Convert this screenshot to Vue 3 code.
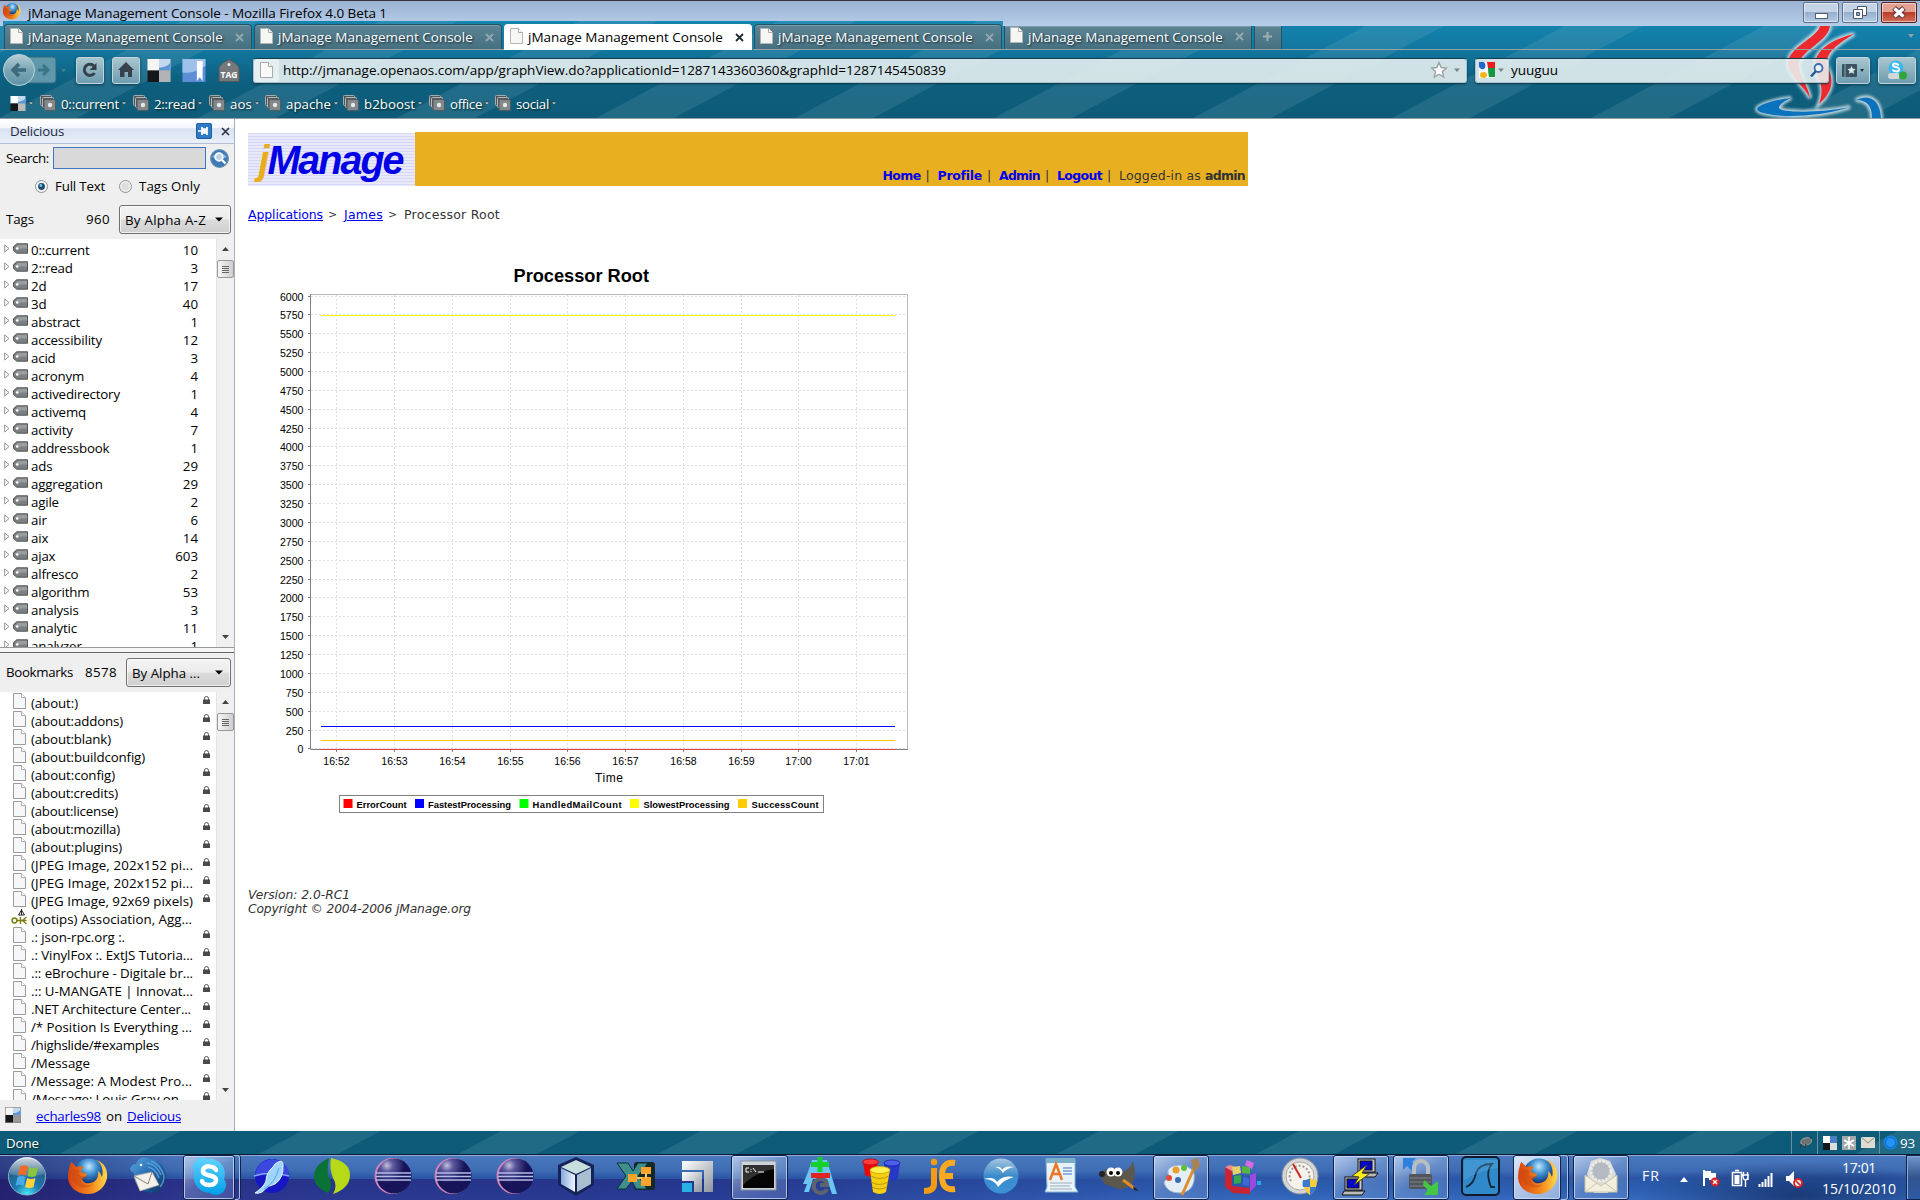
<script setup>
// Sets letter-spacing so that a label occupies an exact width.
const vFit = {
  mounted(el, { value }) {
    const natural = el.getBoundingClientRect().width
    const n = el.textContent.length
    if (value && n) el.style.letterSpacing = ((value - natural) / n).toFixed(3) + 'px'
  }
}

const tabs = [0, 1, 2, 3, 4]
const marks = [
  ['0::current', 58, 93], ['2::read', 41, 76], ['aos', 22, 56], ['apache', 45, 78],
  ['b2boost', 51, 86], ['office', 32, 66], ['social', 33, 70]
]
const tags = [
  ['0::current', 10], ['2::read', 3], ['2d', 17], ['3d', 40], ['abstract', 1], ['accessibility', 12],
  ['acid', 3], ['acronym', 4], ['activedirectory', 1], ['activemq', 4], ['activity', 7], ['addressbook', 1],
  ['ads', 29], ['aggregation', 29], ['agile', 2], ['air', 6], ['aix', 14], ['ajax', 603], ['alfresco', 2],
  ['algorithm', 53], ['analysis', 3], ['analytic', 11], ['analyzer', 1]
]
const books = [
  ['(about:)', 47], ['(about:addons)', 92], ['(about:blank)', 80], ['(about:buildconfig)', 114], ['(about:config)', 84],
  ['(about:credits)', 87], ['(about:license)', 87], ['(about:mozilla)', 89], ['(about:plugins)', 91],
  ['(JPEG Image, 202x152 pi...', 162], ['(JPEG Image, 202x152 pi...', 162], ['(JPEG Image, 92x69 pixels)', 162],
  ['(ootips) Association, Agg...', 161], ['.: json-rpc.org :.', 94], ['.: VinylFox :. ExtJS Tutoria...', 162],
  ['.:: eBrochure - Digitale br...', 162], ['.:: U-MANGATE | Innovat...', 162], ['.NET Architecture Center...', 160],
  ['/* Position Is Everything ...', 161], ['/highslide/#examples', 128], ['/Message', 59],
  ['/Message: A Modest Pro...', 161], ['/Message: Louis Gray on ...', 161]
]
const yTicks = Array.from({ length: 25 }, (_, i) => ({ v: 6000 - i * 250, y: Math.round(176.5 + i * 18.87) - 0.5 - 120 }))
const xTicks = ['16:52', '16:53', '16:54', '16:55', '16:56', '16:57', '16:58', '16:59', '17:00', '17:01']
  .map((t, i) => ({ t, x: Math.round(88.3 + i * 57.77) + 0.5 }))
const legend = [
  ['ErrorCount', '#f00', 95.5, 108.5, 50], ['FastestProcessing', '#00f', 167, 180, 83],
  ['HandledMailCount', '#0f0', 271.5, 284.5, 89], ['SlowestProcessing', '#ff0', 382, 395.5, 86],
  ['SuccessCount', '#fc0', 490, 503.5, 67]
]
const series = [['#ffff00', 75.5], ['#0000ff', 486.5], ['#ffc800', 500.5], ['#dc4040', 509.5]]
const topStripes = Array.from({ length: 12 }, (_, i) => 795 + (i - 5) * 199)
const lowStripes = Array.from({ length: 11 }, (_, i) => 59 + (i - 1) * 199.5)

const fox = (id) => `<defs><radialGradient id="${id}a" cx=".5" cy=".25"><stop offset="0" stop-color="#bfe9ff"/><stop offset=".5" stop-color="#3d8fd0"/><stop offset="1" stop-color="#123a7c"/></radialGradient><linearGradient id="${id}b" x1="0" x2="1"><stop offset="0" stop-color="#d9420f"/><stop offset=".6" stop-color="#f58a1e"/><stop offset="1" stop-color="#ffd84a"/></linearGradient></defs>
<circle cx="25" cy="20.500" r="16" fill="url(#${id}a)"/>
<path d="M7 8c2 1 4 3 5 5 3-1 6-1 8 0-2 1-3 3-3 5l6 2c0 2-3 3-5 4 0 4 4 6 8 5 7-1 9-7 8-12 3 2 3 4 4 6 2-8-1-14-6-17 8 2 12 9 11 18-2 10-10 16-19 16C12 40 5 33 4 24c0-6 1-10 3-16z" fill="url(#${id}b)"/>
<path d="M6 17c3-2 7-2 10 0-3 3 0 7 7 5-1 3-4 3-6 4 1 5 7 7 12 4-6 7-19 3-21-6-1-3-2-5-2-7z" fill="#c8460f" opacity=".5"/>`
const eclipse = `<defs><radialGradient id="ec" cx=".3" cy=".2"><stop offset="0" stop-color="#c4c1de"/><stop offset=".35" stop-color="#5f5aa0"/><stop offset="1" stop-color="#17145a"/></radialGradient></defs><circle cx="22.500" cy="22" r="18" fill="#cf86b8"/><circle cx="24" cy="22" r="17.500" fill="url(#ec)"/><path d="M6 19h35M6 22.500h35M6 26h35" stroke="#b5bbe8" stroke-width="1.300"/>`

const icons = {
  start: `<defs><radialGradient id="st" cx=".5" cy="1" r=".9"><stop offset="0" stop-color="#4df0ff"/><stop offset=".4" stop-color="#1a78b0"/><stop offset="1" stop-color="#2c567c"/></radialGradient><linearGradient id="st2" x2="0" y2="1"><stop offset="0" stop-color="#fff" stop-opacity=".8"/><stop offset="1" stop-color="#fff" stop-opacity=".1"/></linearGradient></defs><circle cx="23" cy="22.500" r="18.500" fill="url(#st)" stroke="#8db6cf"/><path d="M6 20a17 17 0 0 1 34 0q-17 5-34 0z" fill="url(#st2)"/><path d="M16 12.500q4-2.500 8 0l-2 9q-4-2-8 0z" fill="#f06a28"/><path d="M25.500 13q4 2.500 8.500 0l-2 9q-4 2-8.500 0z" fill="#8cc63c"/><path d="M13.500 23q4-2 8 0l-2 9q-4-2.500-8 0z" fill="#4aa9e9"/><path d="M23 24q4 2 8.500 0l-2 9q-4 2-8.500 0z" fill="#ffd23c"/>`,
  firefox: fox('f1'),
  firefox2: fox('f2'),
  thunderbird: `<defs><linearGradient id="tb" x2="1" y2="1"><stop offset="0" stop-color="#5aa9e4"/><stop offset=".5" stop-color="#2368ae"/><stop offset="1" stop-color="#0e2c5e"/></linearGradient></defs><path d="M4 15c1-3 3-5 6-5C12 4 18 2 24 5c9 0 16 8 16 18 0 6-3 10-7 13 1 1-2 3-6 3C15 39 7 30 8 19c-2-1-3-2-4-4z" fill="url(#tb)"/><path d="M21 9q9 1 14 12M25 7q10 4 13 15M22 13q8 2 11 11M34 33q4-5 4-11" fill="none" stroke="#6cb2e8" stroke-width="1.500" opacity=".7"/><path d="M8 22l18-4 7 13-19 6z" fill="#f4f0ea" stroke="#b7ada0" stroke-width=".7"/><path d="M8 22l14 8 4-12" fill="none" stroke="#8b8175"/><circle cx="15" cy="11" r="1.300" fill="#fff"/>`,
  skype: `<defs><linearGradient id="sk" x2="0" y2="1"><stop offset="0" stop-color="#62d2ff"/><stop offset="1" stop-color="#009fe8"/></linearGradient></defs><path d="M7 12a10 10 0 0 1 15-7 15 15 0 0 1 16 20 10 10 0 0 1-14 14A16 16 0 0 1 8 20q-1-4-1-8z" fill="url(#sk)"/><path d="M30 16c-1-4-13-6-13 1 0 6 13 3 13 9 0 7-13 6-14 1" fill="none" stroke="#fff" stroke-width="4.500" stroke-linecap="round"/>`,
  seamonkey: `<circle cx="24" cy="22" r="17" fill="#1717c4"/><path d="M7 22q17-6 34 0-1-15-17-17Q9 7 7 22z" fill="#3a48dd"/><path d="M6 22q16-5 35 0" stroke="#89a8ff" fill="none" stroke-width="1.500"/><path d="M30 8q5-2 5 2 1 14-8 20-7 1-13 8-4 2-7 1 9-6 11-12 0-8 7-14 2-4 5-5z" fill="#9fd4fb" stroke="#e3f5ff"/><path d="M16 35q11-6 15-21" fill="none" stroke="#5aa2e4"/>`,
  leaf: `<path d="M20 4Q5 11 5 22t14 17q5-5 2-13-4-6-1-22z" fill="#0b7236"/><path d="M22 4q19 4 19 17T24 40q5-8 0-16-4-10-2-20z" fill="#b6d918"/>`,
  eclipse,
  cube: `<defs><linearGradient id="cu" x2="1"><stop offset="0" stop-color="#87a9dd"/><stop offset="1" stop-color="#f0f7ff"/></linearGradient></defs><path d="M23 3l18 8v20L23 42 5 31V11z" fill="#14235a"/><path d="M23 6l15 7-15 7-15-7z" fill="#c7e0dd"/><path d="M8 14l14 7v17L8 30z" fill="url(#cu)"/><path d="M38 14l-14 7v17l14-8z" fill="#a9bfd0"/>`,
  xicon: `<rect x="20" y="8" width="21" height="28" rx="3" fill="#14282a"/><path d="M3 9h11l5 8 5-8h10L24 22l9 13H22l-4-8-6 8H3l9-13z" fill="#3f8f8a" stroke="#0b3334"/><g fill="#f9a32c"><rect x="27" y="13" width="10" height="7"/><rect x="14" y="20" width="9" height="8"/><rect x="27" y="23" width="10" height="9"/></g><path d="M32 19v5M23 24h5" stroke="#fbc56a" stroke-width="2"/>`,
  steps: `<defs><linearGradient id="sp" x2="1" y2="1"><stop offset="0" stop-color="#fff"/><stop offset="1" stop-color="#8c949d"/></linearGradient></defs><path d="M8 7h31v31h-9V16H8z" fill="url(#sp)"/><path d="M8 18h20v20h-8V27H8z" fill="url(#sp)"/><rect x="8" y="29" width="10" height="9" fill="#28afe4"/>`,
  cmd: `<rect x="5" y="7" width="35" height="29" fill="#cdd3da" stroke="#8c939c"/><rect x="7" y="11" width="31" height="23" fill="#050505"/><path d="M7 11h31v4Q20 18 7 31z" fill="#444" opacity=".7"/><path d="M13 14h-3v4h3M15 15v1M15 17v1M17 14l3 4M22 18h6" stroke="#fff" fill="none"/>`,
  android: `<path d="M15 6h15l4 14 6 20h-5l-5-15H16l-4 13H7l3-8H6l5-12z" fill="#6bc5f2"/><path d="M30 29a7 7 0 1 0 0 6" fill="none" stroke="#5e646d" stroke-width="4"/><path d="M23 31h9" stroke="#5e646d" stroke-width="4"/><rect x="14" y="19" width="19" height="5" fill="#e12323"/><path d="M23 3v15M14 10.500h18" stroke="#17cf2a" stroke-width="5"/>`,
  coins: `<g stroke-width=".8"><path d="M5 8l2 13q6 4 11-1l2-12z" fill="#e60b0b"/><ellipse cx="12.500" cy="8" rx="8" ry="3" fill="#ff3b3b" stroke="#b00"/><path d="M26 9l1 15q7 5 13 0l2-15z" fill="#2737c7"/><ellipse cx="34" cy="9" rx="8" ry="3" fill="#505fe9" stroke="#1222a0"/><path d="M12 16l3 22q7 4 13 0l4-22z" fill="#f4cf10"/><ellipse cx="22" cy="16" rx="10" ry="3.500" fill="#ffef4c" stroke="#c9a400"/></g><path d="M13 22q9 5 18 0M13 28q8 5 17 0M14 33q8 4 15 0" stroke="#bf9500" fill="none"/>`,
  je: `<path d="M16 14v16q0 7-10 7" fill="none" stroke="#f59a14" stroke-width="6"/><circle cx="16" cy="8" r="3.200" fill="#f59a14"/><path d="M37 9q-13-2-13 13t13 13M22 22h13" fill="none" stroke="#fba91f" stroke-width="6"/>`,
  office: `<defs><linearGradient id="oo" x2="0" y2="1"><stop offset="0" stop-color="#a8c6df"/><stop offset=".5" stop-color="#3a8bcc"/><stop offset="1" stop-color="#3b93d6"/></linearGradient></defs><circle cx="23" cy="22" r="17.500" fill="url(#oo)"/><path d="M17 13q6-1 7 3 3-5 12-3-7 1-11 6-3-5-8-6zM6 25q10-3 13 3 6-7 17-5-9 2-16 10-4-8-14-8z" fill="#fff"/>`,
  wordpad: `<path d="M8 5h29v28l3 5H7l2-5z" fill="#e8f2f9" stroke="#84b7d5"/><rect x="8" y="4" width="29" height="5" fill="#79adc8"/><path d="M12 26l6-16 6 16M14 20h8" stroke="#ec7622" stroke-width="2.500" fill="none"/><path d="M25 14h9M25 17h9M25 20h9" stroke="#4070c0"/><path d="M12 29h22M12 32h20M12 35h22" stroke="#9daab8"/>`,
  gimp: `<path d="M5 18q6-4 10-3l12 2q6-2 9-10 4 14-1 23-8 8-19 3-9-2-11-7z" fill="#5d584d"/><circle cx="5" cy="20" r="3" fill="#222"/><circle cx="14" cy="18" r="4.500" fill="#fff"/><circle cx="21" cy="18" r="4.500" fill="#fff"/><circle cx="14" cy="19" r="2"/><circle cx="21" cy="19" r="2"/><path d="M26 26l11 8" stroke="#e08a28" stroke-width="3"/><path d="M36 32l6 5-5-1z" fill="#222"/>`,
  paint: `<path d="M21 11q18 1 15 16-2 11-14 12-13 0-16-10 0-3 4-4 4-2 0-5Q8 12 21 11z" fill="#e3eef7" stroke="#93b5d0"/><circle cx="18" cy="16" r="3.500" fill="#eb9f2b"/><circle cx="26" cy="14" r="3" fill="#5fbf3a"/><circle cx="11" cy="24" r="3" fill="#e54a30"/><circle cx="20" cy="26" r="3" fill="#3a6ab6"/><path d="M37 12L24 41" stroke="#dd8d2d" stroke-width="3"/><path d="M33 6l7-2 2 8-6 6z" fill="#a98155"/>`,
  rubik: `<path d="M6 13l7 4v15l18 2v6l-17-1-8-6z" fill="#c92433"/><path d="M6 13l5-2 6 2-4 4z" fill="#f28a90"/><path d="M13 13l8-1 1 7-8 2z" fill="#e4d268"/><path d="M23 12l8 1v7l-8-1z" fill="#55b53e"/><path d="M15 22l7-1v8l-7 1z" fill="#35aa4b"/><path d="M24 23l6 1v8l-6-1z" fill="#3c68d8"/><path d="M31 21l6-2v13l-6 6z" fill="#9a4ade"/><path d="M28 6l7 3-2 6-7-4z" fill="#d76be6"/><rect x="38" y="27" width="4" height="4" fill="#28a6e8"/>`,
  gauge: `<circle cx="22" cy="22" r="18" fill="#d3d5d7" stroke="#8d9296"/><circle cx="22" cy="22" r="14" fill="#f5f2ea" stroke="#aaa"/><path d="M13 27a10 10 0 1 1 18-2" fill="none" stroke="#9b9b9b" stroke-width="2" stroke-dasharray="2 2"/><path d="M15 10l8 14" stroke="#c62b27" stroke-width="2"/><path d="M25 26q5 0 7-2 3 2 7 2 0 11-7 15-7-4-7-15z" fill="#f7cf3d"/><path d="M32 24v9h-7q-1-3 0-7 5 0 7-2zM32 33h6q-1 5-6 8z" fill="#3c78cc"/>`,
  putty: `<g stroke="#111"><rect x="20" y="5" width="17" height="13" fill="#ccc"/><rect x="22" y="7" width="12" height="9" fill="#0808c8"/><path d="M19 19h21l-3 4H17z" fill="#bbb"/><rect x="7" y="23" width="17" height="13" fill="#ccc"/><rect x="9" y="25" width="12" height="9" fill="#0808c8"/><path d="M6 37h21l-3 4H4z" fill="#bbb"/></g><path d="M29 11L14 22l7 1-5 8 15-11-7-1z" fill="#ffee1a" stroke="#443"/>`,
  lock: `<path d="M5 4h13l-4 4 4 6-4 3-5-5-4 4z" fill="#2f80dd"/><path d="M16 21v-7a7 7 0 0 1 14 0v8" fill="none" stroke="#babec3" stroke-width="4"/><rect x="11" y="20" width="23" height="15" rx="2" fill="#50555a"/><path d="M12 24h21M12 28h21M12 32h21" stroke="#80868d"/><path d="M26 26l7 6 7-5v14H26l4-5-5-5z" fill="#43c744"/>`,
  shark: `<rect x="4" y="3" width="37" height="38" rx="4" fill="#3089c9" stroke="#101a2b" stroke-width="2"/><path d="M8 33q8-3 10-14 3-9 16-9-7 8-1 23h4" fill="none" stroke="#122740" stroke-width="1.800"/><path d="M6 6h34v8q-17 2-34 12z" fill="#67b5e6" opacity=".3"/>`,
  mail: `<path d="M9 20L13 7l9-3 10 3 6 13-8 19H16z" fill="#dbdcd9"/><circle cx="23" cy="17" r="10" fill="#b5bac2" stroke="#eceae2" stroke-width="3" stroke-dasharray="3 1"/><path d="M7 21l16 11 16-11v17H7z" fill="#f2f0dc" stroke="#c8c5ad"/><path d="M7 38l12-9M39 38l-12-9" stroke="#c5c2ab"/>`
}
const tasks = [
  ['start', 27], ['firefox', 87], ['thunderbird', 149], ['skype', 208, 52, 5], ['seamonkey', 271], ['leaf', 332],
  ['eclipse', 393], ['eclipse', 453], ['eclipse', 515], ['cube', 576], ['xicon', 637], ['steps', 697],
  ['cmd', 759, 57], ['android', 820], ['coins', 881], ['je', 941], ['office', 1001], ['wordpad', 1061], ['gimp', 1120],
  ['paint', 1181, 56], ['rubik', 1242], ['gauge', 1301], ['putty', 1361, 56], ['lock', 1421, 56], ['shark', 1481],
  ['firefox2', 1537, 48, 7], ['mail', 1601, 56]
].map((t, i, a) => ({ icon: t[0], w: t[2], extra: t[3], gap: t[1] - 28 - (i ? a[i - 1][1] + 28 : 0) }))
</script>

<template>
  <div class="screen">
    <header class="chrome">
      <svg class="backdrop" width="1920" height="119" viewBox="0 0 1920 119">
        <defs>
          <linearGradient id="sky" x2="0" y2="1"><stop offset="0" stop-color="#98b1d1" /><stop offset="1" stop-color="#b8cfea" /></linearGradient>
          <linearGradient id="teal" gradientUnits="userSpaceOnUse" y1="21" y2="119" x2="0">
            <stop offset="0" stop-color="#1485b0" /><stop offset=".3" stop-color="#12769e" /><stop offset=".63" stop-color="#0d5f7e" /><stop offset="1" stop-color="#0d5b78" />
          </linearGradient>
          <clipPath id="body"><path d="M0 26h3v-5h1000v5h917v93H0z" /></clipPath>
          <filter id="glow" x="-20%" y="-20%" width="140%" height="140%"><feGaussianBlur stdDeviation="1.600" /></filter>
        </defs>
        <rect width="1920" height="27" fill="url(#sky)" />
        <rect width="1920" height="1" fill="#33343a" />
        <g clip-path="url(#body)">
          <rect width="1920" height="119" fill="url(#teal)" />
          <polygon v-for="x in topStripes" :key="x" :points="`${x},118 ${x + 78},118 ${x + 260},21 ${x + 182},21`" fill="#9fc8d4" opacity=".14" />
          <g id="java">
            <g filter="url(#glow)" fill="#fff" stroke="#fff" stroke-width="4" opacity=".75">
              <path d="M1820 26c-3 12-33 22-32 38 1 12 16 22 22 34-2-14-12-22-11-34 2-14 29-22 31-38z" />
              <path d="M1854 34c-18 4-38 14-39 30-1 14 12 18 4 40 14-12 15-24 9-36-5-12 6-22 26-34z" />
              <path d="M1791 98c-20 2-34 8-34 11 0 7 50 12 93-2-28 6-70 6-71 1 0-3 5-7 12-10zM1856 100c12-6 24-2 25 18h-9c0-12-5-18-16-18z" />
            </g>
            <path d="M1820 26c-3 12-33 22-32 38 1 12 16 22 22 34-2-14-12-22-11-34 2-14 29-22 31-38z" fill="#ec2a2d" />
            <path d="M1854 34c-18 4-38 14-39 30-1 14 12 18 4 40 14-12 15-24 9-36-5-12 6-22 26-34z" fill="#ec2a2d" />
            <path d="M1791 98c-20 2-34 8-34 11 0 7 50 12 93-2-28 6-70 6-71 1 0-3 5-7 12-10zM1856 100c12-6 24-2 25 18h-9c0-12-5-18-16-18z" fill="#0b73bd" />
          </g>
          <path d="M0 49.500h505M753 49.500h1167" stroke="#93a3a6" />
          <path d="M0 118.500h1920" stroke="#959ea1" />
        </g>
      </svg>

      <div class="titlebar">
        <svg class="appicon" viewBox="0 0 46 46" v-html="icons.firefox"></svg>
        <span v-fit="359" class="title">jManage Management Console - Mozilla Firefox 4.0 Beta 1</span>
        <div class="winbtns">
          <span class="wb"><svg width="36" height="21"><rect x="12.500" y="11.500" width="12" height="5" fill="#fff" stroke="#566070" /></svg></span>
          <span class="wb"><svg width="36" height="21"><path d="M15.500 4.500h9v9h-9z" fill="#fff" stroke="#4c5668" /><path d="M11.500 7.500h9v9h-9z" fill="#fff" stroke="#4c5668" /><path d="M14.500 10.500h3v3h-3z" fill="#8fa6c4" stroke="#4c5668" /></svg></span>
          <span class="wb close"><svg width="36" height="21"><path d="M13 6l10 9M23 6l-10 9" stroke="#5a3a40" stroke-width="5.500" /><path d="M13.500 6.500l9 8M22.500 6.500l-9 8" stroke="#fff" stroke-width="3.200" /></svg></span>
        </div>
      </div>

      <div class="tabs">
        <div v-for="i in tabs" :key="i" class="tab" :class="{ active: i === 2, flat: i === 4 }">
          <svg class="page" viewBox="0 0 13 16"><path d="M.5.500h8l4 4v11H.5z" fill="#f6f6f4" stroke="#b5b5b2" /><path d="M8.500.500v4h4" fill="#fff" stroke="#a8a8a5" /></svg>
          <span v-fit="193" class="tabtext">jManage Management Console</span>
          <svg class="x" viewBox="0 0 9 9"><path d="M1 1l7 7M8 1l-7 7" stroke="currentColor" stroke-width="1.800" /></svg>
        </div>
        <div class="tab plus flat"><svg width="11" height="11"><path d="M5.500 1v9M1 5.500h9" stroke="#9fb0b5" stroke-width="2" /></svg></div>
        <svg class="alltabs" width="8" height="6"><path d="M1 1h6L4 5z" fill="#8ca2aa" /></svg>
      </div>

      <div class="nav">
        <svg class="backfwd" width="72" height="36" viewBox="0 0 72 36">
          <defs><linearGradient id="btn" x2="0" y2="1"><stop offset="0" stop-color="#b5ced6" /><stop offset=".5" stop-color="#7ca6b5" /><stop offset="1" stop-color="#5f93a6" /></linearGradient></defs>
          <rect x="22" y="5" width="34" height="26" rx="3" fill="#5f98ab" stroke="#2f687c" />
          <circle cx="19" cy="18" r="15.500" fill="url(#btn)" stroke="#b9d2d9" />
          <path d="M26 18H13m6-6l-6 6 6 6" fill="none" stroke="#3d6a7d" stroke-width="3.500" />
          <path d="M38 18h10m-5-5l5 5-5 5" fill="none" stroke="#3d7388" stroke-width="3" />
          <path d="M61 17h5l-2.500 3z" fill="#4e8194" />
        </svg>
        <span class="tb"><svg width="20" height="20" viewBox="0 0 20 20"><path d="M14.500 13a5.600 5.600 0 1 1-.5-7" fill="none" stroke="#33414b" stroke-width="3" /><path d="M16.500 3v7h-7z" fill="#33414b" /></svg></span>
        <span class="tb home"><svg width="20" height="20" viewBox="0 0 20 20"><path d="M10 2l8 8h-2v7h-4v-5H8.500v5H4v-7H2z" fill="#36434d" /></svg></span>
        <svg class="sq" viewBox="0 0 24 24"><rect width="24" height="24" fill="#777" /><rect width="12" height="12" fill="#f5f5f5" /><rect x="12" width="12" height="12" fill="#c3d8ee" /><path d="M12 12V9q8 0 12-5v8z" fill="#5c95d6" /><rect y="12" width="12" height="12" fill="#15181a" /><rect x="12" y="12" width="12" height="12" fill="#b2b3b4" /></svg>
        <svg class="sq b" viewBox="0 0 24 24"><rect width="24" height="24" fill="#5c8fd6" /><path d="M0 0h24v7Q12 16 0 14z" fill="#9fc0ea" /><path d="M15 2h6v21l-3-4-3 4z" fill="#fff" /></svg>
        <svg class="tagbtn" viewBox="0 0 22 22"><path d="M4 4l7-4 7 4 3 4v14H1V8z" fill="#75797b" stroke="#55595b" /><circle cx="11" cy="5" r="1.500" fill="#eee" /><text x="11" y="18.500" text-anchor="middle" textLength="17" lengthAdjust="spacingAndGlyphs" font-family="Open Sans, sans-serif" font-weight="700" font-size="8.500" fill="#fff">TAG</text></svg>
        <div class="url">
          <span class="ident"><svg class="page" viewBox="0 0 13 16"><path d="M.5.500h8l4 4v11H.5z" fill="#fafafa" stroke="#a8a8a5" /><path d="M8.500.500v4h4" fill="#fff" stroke="#a8a8a5" /></svg></span>
          <span v-fit="663" class="urltext">http://jmanage.openaos.com/app/graphView.do?applicationId=1287143360360&amp;graphId=1287145450839</span>
          <svg class="star" viewBox="0 0 18 18"><path d="M9 1.500l2.200 5 5.300.500-4 3.600 1.200 5.400L9 13.200 4.300 16l1.200-5.400-4-3.600 5.300-.5z" fill="#fdfefe" stroke="#9aa2a5" stroke-width="1.400" /></svg>
          <svg width="8" height="5"><path d="M1 .5h6L4 4z" fill="#7b8487" /></svg>
        </div>
        <div class="search">
          <svg class="google" viewBox="0 0 16 16"><rect width="16" height="16" fill="#f5f8f8" /><path d="M8 0h8v6H9z" fill="#ea1c1c" /><path d="M9 6h7v9h-6q-1-5-1-9z" fill="#159640" /><path d="M0 0h5q3 4 0 7-3 1-5-2z" fill="#2266cf" /><path d="M6 5q2 2 3 7H6z" fill="#fff" /><ellipse cx="4.500" cy="13" rx="3.500" ry="3" fill="#f5b516" /></svg>
          <svg width="8" height="5"><path d="M1 .5h6L4 4z" fill="#7b8487" /></svg>
          <span v-fit="47" class="query">yuuguu</span>
          <svg class="mag" viewBox="0 0 14 14"><circle cx="8.500" cy="5" r="4" fill="#e8f2fb" stroke="#3a6dad" stroke-width="1.800" /><path d="M6 8l-5 5.500" stroke="#27568f" stroke-width="2.400" /></svg>
        </div>
        <span class="tb wide"><svg width="28" height="20" viewBox="0 0 28 20"><rect x="3" y="4" width="15" height="13" rx="1" fill="#3b5361" /><path d="M6 4v13" stroke="#91a9b3" /><path d="M12.500 6l1.300 2.700 2.700.300-2 2 .6 2.800-2.600-1.400-2.600 1.400.6-2.800-2-2 2.700-.3z" fill="#d8e8ee" /><path d="M21 9h4l-2 3z" fill="#1f2f38" /></svg></span>
        <span class="tb sky"><svg width="24" height="24" viewBox="0 0 24 24"><circle cx="11" cy="10" r="7.500" fill="#3bb8ef" /><path d="M14 7q-6-3-6 0c0 3 6 1 6 4.500 0 3-6 2-6 0" fill="none" stroke="#fff" stroke-width="2" /><rect x="3" y="15" width="12" height="6" rx="3" fill="#d2d8da" /><circle cx="18" cy="17.500" r="4" fill="#32a43a" /></svg></span>
      </div>

      <div class="bookmarks">
        <svg class="mini" viewBox="0 0 24 24"><rect width="12" height="12" fill="#fff" /><rect x="12" width="12" height="12" fill="#c3d8ee" /><path d="M12 12V9q8 0 12-5v8z" fill="#5c95d6" /><rect y="12" width="12" height="12" fill="#15181a" /><rect x="12" y="12" width="12" height="12" fill="#bbb" /></svg>
        <svg class="dd first" viewBox="0 0 6 5"><path d="M.5 1h5L3 4z" fill="#b7cbd2" stroke="#123" stroke-width=".5" /></svg>
        <div v-for="m in marks" :key="m[0]" class="mark" :style="{ width: m[2] + 'px' }">
          <svg class="fold" viewBox="0 0 16 16"><rect x=".5" y=".5" width="11" height="10" rx="1" fill="#4f5456" stroke="#a5aaac" /><rect x="2.500" y="2.500" width="11" height="10" rx="1" fill="#565b5d" stroke="#b5b9bb" /><rect x="4" y="4.500" width="11.500" height="11" rx="1.500" fill="#83888a" stroke="#55595b" /><circle cx="10" cy="10" r="2.200" fill="#e6e8e9" /></svg>
          <span v-fit="m[1]" class="marktext">{{ m[0] }}</span>
          <svg class="dd" viewBox="0 0 6 5"><path d="M.5 1h5L3 4z" fill="#b7cbd2" stroke="#123" stroke-width=".5" /></svg>
        </div>
      </div>
    </header>

    <main class="middle">
      <aside class="side">
        <div class="sidehead">
          <span v-fit="54">Delicious</span>
          <svg class="pin" viewBox="0 0 16 16"><rect width="16" height="16" rx="2" fill="#2e7cc5" /><rect x=".5" y=".5" width="15" height="15" rx="2" fill="none" stroke="#1d5f9f" /><path d="M2 8h4M6 4v8M6 6h5M6 10h5M11 4v8" stroke="#fff" stroke-width="1.700" /><path d="M6 6h5v4H6z" fill="#fff" /></svg>
          <svg class="cx" viewBox="0 0 9 9"><path d="M1 1l7 7M8 1L1 8" stroke="#2d333b" stroke-width="1.600" /></svg>
        </div>
        <div class="srow">
          <span v-fit="43">Search:</span>
          <span class="sinput"></span>
          <svg class="go" viewBox="0 0 19 19"><circle cx="9.500" cy="9.500" r="9" fill="#4079b4" stroke="#6e93b5" /><path d="M2 8q7-9 15 0-7 4-15 0z" fill="#a9c8e5" opacity=".7" /><circle cx="9" cy="8" r="3.800" fill="#b8d4ec" stroke="#fff" stroke-width="1.700" /><path d="M12 11l3.500 3.500" stroke="#fff" stroke-width="2.300" /></svg>
        </div>
        <div class="rrow">
          <svg class="radio" viewBox="0 0 13 13"><circle cx="6.500" cy="6.500" r="6" fill="#f4f6f7" stroke="#8e9295" /><circle cx="6.500" cy="6.500" r="3.400" fill="#1b4c6e" /><circle cx="5.800" cy="5.500" r="1.400" fill="#6fc6ea" /></svg>
          <span v-fit="50" class="full">Full Text</span>
          <svg class="radio" viewBox="0 0 13 13"><circle cx="6.500" cy="6.500" r="6" fill="#f0f0f0" stroke="#8e9295" /><circle cx="6.500" cy="6.500" r="4" fill="#dcdedf" /></svg>
          <span v-fit="61">Tags Only</span>
        </div>
        <div class="trow">
          <span v-fit="28" class="up1">Tags</span><span v-fit="24" class="cnt up1">960</span>
          <span class="select"><span v-fit="81">By Alpha A-Z</span><svg width="8" height="5"><path d="M0 .5h8L4 4.500z" fill="#000" /></svg></span>
        </div>
        <div class="listwrap tagsbox">
          <div class="list">
            <div v-for="t in tags" :key="t[0]" class="tag">
              <svg class="tri" viewBox="0 0 6 9"><path d="M.7.900L5 4.500.7 8.100z" fill="#fff" stroke="#949494" /></svg>
              <svg class="tagicon" viewBox="0 0 16 11"><path d="M4 .5h11.500v10H4L.5 7.500v-4z" fill="#7c8082" stroke="#494c4e" /><path d="M5 1.500h10v4H2z" fill="#aeb1b3" opacity=".6" /><circle cx="4.500" cy="5.500" r="1.400" fill="#fff" /></svg>
              <span>{{ t[0] }}</span><span class="num">{{ t[1] }}</span>
            </div>
          </div>
          <div class="scroll"><svg class="ar" viewBox="0 0 7 4"><path d="M0 4h7L3.500 0z" fill="#444" /></svg><i class="thumb"><b></b><b></b><b></b><b></b></i><svg class="ar dn" viewBox="0 0 7 4"><path d="M0 0h7L3.500 4z" fill="#444" /></svg></div>
        </div>
        <div class="split"></div>
        <div class="brow">
          <span v-fit="67" class="up1">Bookmarks</span><span v-fit="32" class="cnt2 up1">8578</span>
          <span class="select s2"><span v-fit="68">By Alpha ...</span><svg width="8" height="5"><path d="M0 .5h8L4 4.500z" fill="#000" /></svg></span>
        </div>
        <div class="listwrap booksbox">
          <div class="list">
            <div v-for="(b, i) in books" :key="i" class="book">
              <svg v-if="i === 12" class="oot" viewBox="0 0 16 16"><path d="M10 0v6M7 6h6M10 1L7 6M10 1l3 5" stroke="#222" fill="none" /><circle cx="3" cy="11.500" r="2.400" fill="none" stroke="#7d7d10" stroke-width="1.500" /><path d="M5 11.500h10M9 8v7M15 8l-4 3.500 4 3.500" stroke="#7d7d10" stroke-width="1.400" fill="none" /></svg>
              <svg v-else class="bpage" viewBox="0 0 13 16"><path d="M.5.500h8l4 4v11H.5z" fill="#f7f6f8" stroke="#9a9a9a" /><path d="M8.500.500v4h4" fill="#fff" stroke="#b0b0b0" /></svg>
              <span v-fit="b[1]">{{ b[0] }}</span>
              <svg v-if="i !== 12" class="lk" viewBox="0 0 7 8"><path d="M1.500 4V2.500a2 2 0 0 1 4 0V4" fill="none" stroke="#555" /><rect y="3.500" width="7" height="4.500" fill="#4a4a4c" /></svg>
            </div>
          </div>
          <div class="scroll"><svg class="ar" viewBox="0 0 7 4"><path d="M0 4h7L3.500 0z" fill="#444" /></svg><i class="thumb"><b></b><b></b><b></b><b></b></i><svg class="ar dn" viewBox="0 0 7 4"><path d="M0 0h7L3.500 4z" fill="#444" /></svg></div>
        </div>
        <div class="sfoot">
          <svg class="mini m2" viewBox="0 0 24 24"><rect width="24" height="24" fill="#888" /><rect x="1" y="1" width="11" height="11" fill="#f5f5f5" /><rect x="12" y="1" width="11" height="11" fill="#c3d8ee" /><path d="M12 12V9q8 0 11-5v8z" fill="#5c95d6" /><rect x="1" y="12" width="11" height="11" fill="#15181a" /><rect x="12" y="12" width="11" height="11" fill="#999" /></svg>
          <a v-fit="65" class="l1">echarles98</a><span v-fit="16">on</span><a v-fit="54">Delicious</a>
        </div>
      </aside>

      <section class="content">
        <div class="banner">
          <svg class="logo" width="167" height="53" viewBox="0 0 167 53">
            <defs><pattern id="lines" width="4" height="3" patternUnits="userSpaceOnUse"><rect width="4" height="3" fill="#e9e9fb" /><rect width="4" height="1" fill="#d6d6f7" /></pattern></defs>
            <rect width="167" height="53" fill="url(#lines)" />
            <text x="10.500" y="40.500" font-family="Liberation Sans, Arial, sans-serif" font-weight="700" font-style="italic" font-size="40" textLength="144" lengthAdjust="spacingAndGlyphs" letter-spacing="-2" fill="#0000e6"><tspan fill="#e8ad1c">j</tspan>Manage</text>
          </svg>
          <nav class="links">
            <b v-fit="38" class="a">Home</b><span class="bar">|</span>
            <b v-fit="44" class="a">Profile</b><span class="bar">|</span>
            <b v-fit="41" class="a">Admin</b><span class="bar">|</span>
            <b v-fit="45" class="a">Logout</b><span class="bar">|</span>
            <span v-fit="82">Logged-in as</span><b v-fit="40" class="who">admin</b>
          </nav>
        </div>
        <div class="crumbs">
          <a v-fit="75">Applications</a><span class="gt">&gt;</span><a v-fit="39">James</a><span class="gt g2">&gt;</span><span v-fit="96">Processor Root</span>
        </div>
        <svg class="chart" width="700" height="580" viewBox="0 0 700 580">
          <text x="265.500" y="42" font-weight="700" font-size="17.500" textLength="135.500" lengthAdjust="spacingAndGlyphs">Processor Root</text>
          <path d="M62.500 54.500h597v455" fill="none" stroke="#b9b9b9" />
          <g v-for="t in yTicks" :key="t.v">
            <path :d="`M63 ${t.y}H659`" stroke="#dedede" stroke-dasharray="2 2" />
            <path :d="`M60 ${t.y}h3`" stroke="#808080" />
            <text x="55.500" :y="t.y + 4.500" text-anchor="end" font-size="10.600">{{ t.v }}</text>
          </g>
          <g v-for="t in xTicks" :key="t.t">
            <path :d="`M${t.x} 55V509`" stroke="#dedede" stroke-dasharray="2 2" />
            <path :d="`M${t.x} 509v3`" stroke="#808080" />
            <text :x="t.x" y="524.500" text-anchor="middle" font-size="10.500">{{ t.t }}</text>
          </g>
          <path d="M62.500 54V509.500H660" fill="none" stroke="#808080" />
          <path v-for="s in series" :key="s[0]" :d="`M73 ${s[1]}H647`" :stroke="s[0]" />
          <text x="347" y="542" font-size="12" textLength="28">Time</text>
          <rect x="91.500" y="555.500" width="484" height="17" fill="#fff" stroke="#808080" />
          <g v-for="l in legend" :key="l[0]">
            <rect :x="l[2]" y="559" width="9" height="9" :fill="l[1]" />
            <text :x="l[3]" y="567.500" font-size="9.400" font-weight="700" :textLength="l[4]">{{ l[0] }}</text>
          </g>
        </svg>
        <div class="foot"><div><span v-fit="102">Version: 2.0-RC1</span></div><div><span v-fit="223">Copyright © 2004-2006 jManage.org</span></div></div>
      </section>
    </main>

    <div class="status">
      <svg class="backdrop" width="1920" height="23" viewBox="0 0 1920 23"><rect width="1920" height="23" fill="#0d5b78" /><polygon v-for="x in lowStripes" :key="x" :points="`${x},23 ${x + 79},23 ${x + 122},0 ${x + 43},0`" fill="#9fc8d4" opacity=".14" /></svg>
      <span v-fit="33" class="done">Done</span>
      <div class="sicons">
        <span class="cell c1"><svg width="18" height="16"><ellipse cx="9" cy="6.500" rx="5.500" ry="3.500" transform="rotate(-15 9 6)" fill="#6c7172" stroke="#9aa0a0" /><path d="M5 9l-2 4M9 9l-1 4M13 4l2-2" stroke="#333" /></svg></span>
        <span class="cell c2">
          <svg width="14" height="14" viewBox="0 0 24 24"><rect width="12" height="12" fill="#fff" /><rect x="12" width="12" height="12" fill="#4b7fc4" /><rect y="12" width="12" height="12" fill="#15181a" /><rect x="12" y="12" width="12" height="12" fill="#ddd" /></svg>
          <svg width="14" height="14"><rect width="14" height="14" fill="#a3a9ab" /><path d="M7 1v12M2 4l10 6M12 4L2 10" stroke="#fff" stroke-width="1.500" /></svg>
          <svg width="14" height="11"><rect width="14" height="11" fill="#dfddd0" /><path d="M0 0l7 6 7-6" stroke="#8e8c7c" fill="none" /></svg>
        </span>
        <span class="cell c3"><svg width="15" height="15"><circle cx="7.500" cy="7.500" r="7" fill="#1a82e2" /><circle cx="7.500" cy="7.500" r="5" fill="#2394f4" stroke="#1668b8" /></svg><span v-fit="15">93</span></span>
      </div>
    </div>

    <footer class="taskbar">
      <div v-for="(t, i) in tasks" :key="i" class="task" :style="{ marginLeft: t.gap + 'px' }">
        <div class="frame" :class="{ on: t.w, hot: t.icon === 'firefox2' }" :style="{ width: (t.w || 46) + 'px' }">
          <svg width="46" height="46" viewBox="0 0 46 46" v-html="icons[t.icon]"></svg>
        </div>
        <i v-if="t.extra" class="sliver" :style="{ width: t.extra + 'px' }"></i>
      </div>
      <div class="tray">
        <span v-fit="18" class="lang">FR</span>
        <svg class="up" width="8" height="5"><path d="M0 5h8L4 0z" fill="#fff" /></svg>
        <svg class="flag" width="20" height="20"><path d="M3 2v16" stroke="#fff" stroke-width="2" /><path d="M4 3h6v2h5v7h-7v-2H4z" fill="#fff" /><circle cx="14" cy="14" r="4.500" fill="#d82323" /><path d="M12 12l4 4M16 12l-4 4" stroke="#fff" stroke-width="1.300" /></svg>
        <svg class="bat" width="20" height="20"><path d="M2.500 4.500h9v13h-9zM5 2.500h4" fill="none" stroke="#fff" stroke-width="1.600" /><rect x="4.500" y="7" width="5" height="9" fill="#fff" /><path d="M12 7h7M13.500 4v3M17.500 4v3M13 7q0 5 2.500 5T18 7v5M15.500 12v7" stroke="#fff" stroke-width="1.400" fill="none" /></svg>
        <svg class="sig" width="16" height="14"><path d="M1.500 11v3M4.500 9v5M7.500 6v8M10.500 3v11M13.500 0v14" stroke="#fff" stroke-width="2" /></svg>
        <svg class="spk" width="18" height="20"><path d="M1 7h3l5-5v15l-5-5H1z" fill="#fff" /><circle cx="13" cy="14" r="4" fill="#dfe5ec" stroke="#d82323" stroke-width="1.800" /><path d="M10.500 11.500l5 5" stroke="#d82323" stroke-width="1.600" /></svg>
        <div class="clock"><span v-fit="34">17:01</span><span v-fit="74">15/10/2010</span></div>
        <div class="peek"></div>
      </div>
    </footer>
  </div>
</template>

<style>
body { margin: 0; overflow: hidden; background: #fff; }
</style>

<style scoped>
.screen { width: 1920px; height: 1200px; overflow: hidden; display: flex; flex-direction: column; font-family: "Open Sans", "Noto Sans", sans-serif; font-size: 13.3px; color: #000; background: #fff; }
.screen * { box-sizing: border-box; }
span, b, a { white-space: pre; }
svg { display: block; flex: none; }
.backdrop { position: absolute; left: 0; top: 0; z-index: 0; }
.chrome { position: relative; height: 119px; flex: none; }
.titlebar, .tabs, .nav, .bookmarks { position: relative; z-index: 1; display: flex; }
.titlebar { height: 24px; align-items: flex-start; }
.appicon { width: 21px; height: 21px; margin: 1px 6px 0 1px; }
.title { line-height: 18px; margin-top: 4px; font-size: 13.5px; }
.winbtns { margin: 2px 3px 0 auto; display: flex; gap: 3px; }
.wb { width: 36px; height: 21px; border: 1px solid #5d6f8a; border-radius: 2px; background: linear-gradient(#c4d3e6 0 45%, #95aeca 48%, #b4cbe5); box-shadow: inset 0 0 0 1px rgba(255,255,255,.5); }
.wb svg { margin: -1px; }
.wb.close { background: linear-gradient(#e3a191 0 45%, #b83b25 48%, #d2705a); border-color: #5b1f20; }
.tabs { height: 26px; padding-left: 4px; gap: 2px; }
.tab { width: 248px; height: 25px; flex: none; display: flex; align-items: center; padding: 0 5px; color: #fff; background: linear-gradient(#5b8494, #46707f); border: 1px solid #1f5368; border-bottom: 0; border-radius: 4px 4px 0 0; text-shadow: 1px 1px 2px #123; box-shadow: inset 0 1px 0 rgba(255,255,255,.2); }
.tab.active { background: #fff; color: #000; text-shadow: none; height: 26px; border-color: #fff; padding-bottom: 1px; }
.tab.flat { margin-top: 2px; height: 23px; border-radius: 0; border-top: 0; padding-bottom: 2px; }
.tab .page { width: 13px; height: 16px; margin: 0 5px 3px 0; }
.tabtext { line-height: 24px; width: 193px; font-size: 13.5px; }
.tab .x { width: 9px; height: 9px; margin-left: auto; margin-right: 2px; color: #93a9b1; }
.tab.active .x { color: #1d2b33; }
.tab.plus { width: 28px; padding: 0 0 2px 7px; }
.alltabs { margin: 9px 5px 0 auto; }
.nav { height: 40px; align-items: center; }
.backfwd { margin-right: 4px; }
.tb { width: 28px; height: 27px; border-radius: 3px; border: 1px solid #c1d6dc; background: linear-gradient(#a9c6cf, #6e9caf); display: flex; align-items: center; justify-content: center; box-shadow: 0 1px 3px #0a3c52; }
.home { margin-left: 8px; }
.sq { width: 24px; height: 23px; margin-left: 7px; }
.sq.b { margin-left: 11px; }
.tagbtn { width: 22px; height: 23px; margin-left: 12px; }
.url, .search { height: 25px; border-radius: 3px; background: rgba(234,242,243,.88); border: 1px solid #a9c4cc; border-top-color: #123f52; display: flex; align-items: center; box-shadow: 0 1px 2px #0a3447; font-size: 13.5px; }
.url { width: 1214px; margin-left: 13px; padding-right: 5px; }
.ident { width: 25px; height: 23px; background: rgba(255,255,255,.45); display: flex; align-items: center; justify-content: center; margin-right: 4px; border-radius: 3px; }
.ident .page { width: 13px; height: 16px; }
.star { width: 18px; height: 18px; margin-left: auto; margin-right: 8px; margin-right: 7px; transform: translateX(2px); }
.search { width: 354px; margin-left: 8px; padding-left: 3px; }
.google { width: 16px; height: 16px; margin-right: 2px; }
.query { margin-left: 6px; }
.mag { width: 14px; height: 14px; margin-left: auto; margin-right: 4px; }
.tb.wide { width: 34px; margin-left: 7px; }
.tb.sky { width: 38px; margin-left: 8px; }
.bookmarks { height: 27px; align-items: center; padding-left: 10px; color: #fff; }
.mini { width: 16px; height: 15px; }
.dd { width: 6px; height: 5px; margin-left: 2px; }
.dd.first { margin-right: 6px; }
.mark { display: flex; align-items: center; flex: none; }
.fold { width: 16px; height: 16px; margin-right: 5px; margin-bottom: 1px; }
.marktext { line-height: 24px; text-shadow: 1px 1px 2px #022; }
.middle { height: 1012px; display: flex; flex: none; }
.side { width: 235px; background: #efefef; border-right: 1px solid #a3b1cd; display: flex; flex-direction: column; }
.sidehead { height: 25px; display: flex; align-items: center; padding-left: 10px; border-bottom: 1px solid #b4bfd6; background: linear-gradient(#fff, #f3f6fb 38%, #d8e1f1 40%, #eaf0fa); color: #1e2a44; }
.pin { width: 16px; height: 16px; margin-left: auto; margin-right: 9px; }
.cx { width: 9px; height: 9px; margin-right: 4px; }
.srow { height: 28px; display: flex; align-items: center; padding-left: 6px; }
.sinput { width: 153px; height: 22px; border: 1px solid #4176c4; background: #d9d9d9; margin-left: 4px; }
.go { width: 19px; height: 19px; margin-left: 4px; }
.rrow { height: 28px; display: flex; align-items: center; padding-left: 35px; }
.radio { width: 13px; height: 13px; margin-right: 7px; }
.full { margin-right: 14px; }
.trow { height: 39px; display: flex; align-items: center; padding-left: 6px; }
.up1 { padding-bottom: 2px; }
.cnt { margin-left: 52px; margin-right: 9px; }
.select { width: 112px; height: 29px; border: 1px solid #707070; border-radius: 3px; background: linear-gradient(#f3f3f3, #ececec 48%, #dcdcdc 52%, #cfcfcf); display: flex; align-items: center; padding: 0 7px 0 5px; justify-content: space-between; box-shadow: inset 0 0 0 1px rgba(255,255,255,.7); }
.listwrap { display: flex; overflow: hidden; background: #fff; flex: none; }
.list { flex: 1; overflow: hidden; }
.tagsbox { height: 408px; }
.tag, .book { height: 18px; display: flex; align-items: center; line-height: 18px; }
.tag { padding: 0 18px 0 4px; letter-spacing: -.18px; position: relative; top: 2px; }
.tri { width: 6px; height: 9px; margin: 0 3px 4px 0; }
.tagicon { width: 15px; height: 11px; margin: 0 3px 4px 0; }
.num { margin-left: auto; letter-spacing: 0; }
.scroll { width: 18px; background: #f0f0f0; border-left: 1px solid #e4e4e4; display: flex; flex-direction: column; align-items: center; }
.ar { width: 7px; height: 4px; margin: 8px 0 9px; }
.ar.dn { margin: auto 0 8px; }
.thumb { width: 17px; height: 18px; flex: none; border: 1px solid #979797; border-radius: 2px; background: linear-gradient(90deg, #f5f5f5, #e2e2e2 50%, #cfcfcf); display: flex; flex-direction: column; align-items: center; justify-content: center; gap: 1px; }
.thumb b { width: 7px; height: 1px; background: #666; }
.split { height: 6px; flex: none; border-top: 1px solid #999; border-bottom: 1px solid #666; background: #f6f6f6; }
.brow { height: 39px; display: flex; align-items: center; padding-left: 6px; flex: none; }
.cnt2 { margin-left: 12px; margin-right: 9px; }
.s2 { width: 105px; }
.booksbox { height: 408px; }
.book { padding: 0 6px 0 13px; position: relative; top: 2px; }
.bpage { width: 13px; height: 16px; margin: 0 5px 4px 0; }
.oot { width: 17px; height: 16px; margin: 0 3px 5px -2px; }
.lk { width: 7px; height: 8px; margin: 0 0 7px auto; }
.sfoot { height: 31px; display: flex; align-items: center; padding-left: 5px; }
.m2 { height: 16px; margin-bottom: 2px; }
a { color: #00e; text-decoration: underline; }
.sfoot .l1 { margin-left: 15px; }
.sfoot span { margin: 0 5px; }
.content { flex: 1; padding: 13px 0 0 13px; background: #fff; font-family: "DejaVu Sans", Verdana, sans-serif; font-size: 12.5px; color: #333; }
.banner { width: 1000px; height: 54px; background: linear-gradient(#e8b020, #e8b020) 167px 0 no-repeat; display: flex; }
.logo { margin-top: 1px; }
.links { margin-left: auto; display: flex; align-items: flex-end; padding: 0 3px 2px 0; line-height: 16px; }
.links .a { color: #00e; }
.bar { width: 17px; padding-left: 5px; }
.who { margin-left: 4px; }
.crumbs { margin-top: 20px; height: 18px; line-height: 18px; display: flex; }
.gt { width: 21px; padding-left: 5px; font-size: 11px; }
.chart { margin-top: 16px; font-family: "Liberation Sans", Arial, sans-serif; }
.foot { margin-top: 68px; font-style: italic; line-height: 14.300px; font-size: 12.3px; }
.status { position: relative; height: 23px; flex: none; display: flex; align-items: center; color: #fff; }
.done { position: relative; margin-left: 6px; text-shadow: 1px 1px 2px #022; }
.sicons { position: relative; margin-left: auto; display: flex; height: 23px; }
.cell { display: flex; align-items: center; border-left: 1px solid #6d8f99; }
.c1 { width: 26px; padding-left: 5px; }
.c2 { width: 62px; padding-left: 5px; gap: 5px; }
.c3 { width: 41px; padding-left: 3px; gap: 2px; }
.taskbar { height: 46px; flex: none; display: flex; border-top: 1px solid #0d1b34; box-shadow: inset 0 1px 0 #8fabd6;
  background:
    radial-gradient(ellipse 160px 34px at 1800px 40px, rgba(20,44,96,.75), transparent),
    linear-gradient(90deg, rgba(30,20,90,.55), transparent 190px),
    linear-gradient(90deg, rgba(42,32,120,.7) 0, rgba(36,40,130,.7) 700px, rgba(36,90,180,0) 1250px) 0 24px no-repeat,
    linear-gradient(#4b79bf, #3e6cb4 35%, #2c56a6 50%, #2a5cae 70%, #3569bd); }
.task { width: 56px; height: 45px; flex: none; position: relative; display: flex; justify-content: center; }
.frame { height: 45px; flex: none; display: flex; justify-content: center; align-items: center; }
.frame svg { margin-top: -1px; }
.frame.on { border: 1px solid #13224a; border-radius: 3px; box-shadow: inset 0 0 0 1px rgba(210,225,250,.75); background: linear-gradient(145deg, rgba(230,240,255,.65), rgba(170,195,235,.32) 50%, rgba(150,180,230,.2)); }
.frame.hot { background: linear-gradient(145deg, rgba(245,250,255,.85), rgba(190,210,240,.65)); }
.sliver { height: 45px; border: 1px solid #a9bfe2; border-left: 0; border-radius: 0 3px 3px 0; flex: none; margin-right: -6px; box-shadow: 1px 0 0 #13224a; }
.tray { display: flex; align-items: center; color: #fff; flex: 1; height: 45px; margin-left: 13px; font-size: 14px; }
.lang { margin-top: -4px; }
.up { margin: 3px 0 0 20px; }
.flag { margin-left: 13px; }
.bat { margin-left: 9px; }
.sig { margin-left: 8px; margin-top: 4px; }
.spk { margin-left: 11px; margin-top: 3px; }
.clock { display: flex; flex-direction: column; align-items: center; width: 78px; margin-left: auto; margin-right: 8px; line-height: 21px; }
.peek { width: 14px; height: 45px; border: 1px solid #14264f; border-right: 0; background: linear-gradient(#7295cc, #33558f 50%, #2d59a5); box-shadow: inset 1px 1px 0 #8ba8d4; }
</style>
